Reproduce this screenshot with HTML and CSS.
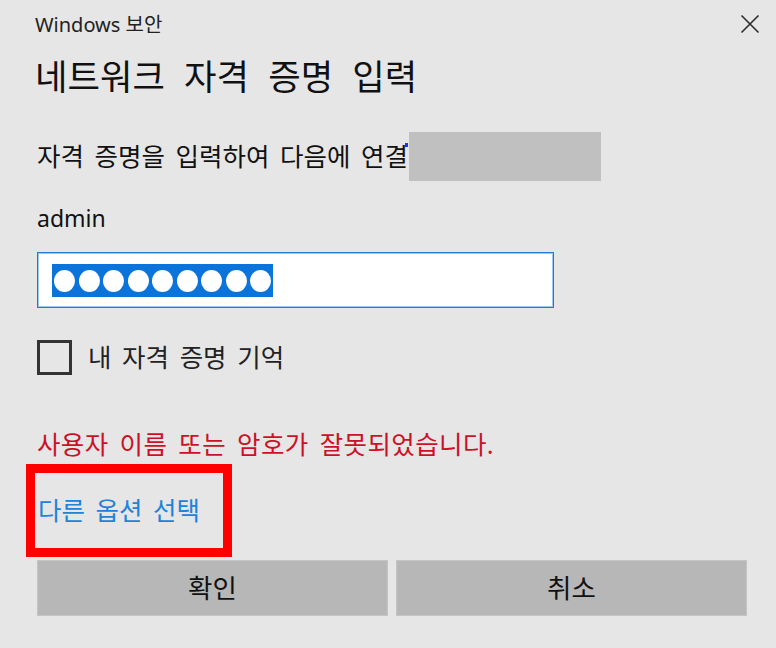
FILE: index.html
```html
<!DOCTYPE html>
<html lang="ko">
<head>
<meta charset="utf-8">
<title>Windows 보안</title>
<link rel="stylesheet" href="styles.css">
</head>
<body>
<div class="dialog">
  <div class="header">
    <span class="app-name">Windows 보안</span>
    <svg class="close" width="20" height="20" viewBox="0 0 20 20" aria-label="닫기">
      <path d="M1.5 1.5 L18.5 18.5 M18.5 1.5 L1.5 18.5" stroke="#2b2b2b" stroke-width="1.6" fill="none"/>
    </svg>
  </div>
  <h1 class="title">네트워크 자격 증명 입력</h1>
  <div class="prompt">
    <span class="prompt-text">자격 증명을 입력하여 다음에 연결</span><span class="redact"><span class="caret-dot"></span></span>
  </div>
  <div class="user">admin</div>
  <div class="password">
    <span class="selection">
      <span class="dot"></span><span class="dot"></span><span class="dot"></span><span class="dot"></span><span class="dot"></span><span class="dot"></span><span class="dot"></span><span class="dot"></span><span class="dot"></span>
    </span>
  </div>
  <div class="remember">
    <span class="checkbox"></span>
    <span class="remember-label">내 자격 증명 기억</span>
  </div>
  <div class="error">사용자 이름 또는 암호가 잘못되었습니다.</div>
  <div class="more">
    <span class="link">다른 옵션 선택</span>
    <span class="highlight"></span>
  </div>
  <div class="buttons">
    <div class="btn">확인</div>
    <div class="btn">취소</div>
  </div>
</div>
</body>
</html>
```

FILE: styles.css
```css
html, body {
  margin: 0;
  padding: 0;
  background: #e6e6e6;
}
body {
  font-family: "Noto Sans", "Noto Sans CJK KR", sans-serif;
  color: #111;
  width: 776px;
  height: 648px;
  overflow: hidden;
}
.dialog {
  padding: 0 29px 0 37px;
}
.header {
  height: 50px;
  display: flex;
  align-items: center;
  justify-content: space-between;
  margin-left: -2px;
  margin-right: -13px;
}
.app-name {
  font-size: 20px;
  line-height: 50px;
  color: #222;
}
.close {
  display: block;
  margin-top: -2px;
}
.title {
  margin: 0 0 0 -2px;
  height: 53px;
  line-height: 53px;
  font-size: 35.3px;
  font-weight: normal;
  word-spacing: 10px;
  color: #111;
  white-space: nowrap;
}
.prompt {
  margin-top: 29px;
  height: 49px;
  display: flex;
  align-items: center;
  font-size: 25.5px;
  word-spacing: 4px;
  white-space: nowrap;
}
.prompt-text {
  line-height: 49px;
}
.redact {
  position: relative;
  display: block;
  width: 192px;
  height: 49px;
  background: #c0c0c0;
  margin-left: 1px;
}
.caret-dot {
  position: absolute;
  left: -4px;
  top: 11px;
  width: 3px;
  height: 4px;
  background: #1a33ff;
}
.user {
  margin-top: 14px;
  height: 47px;
  line-height: 47px;
  font-size: 23px;
}
.password {
  margin-top: 10px;
  width: 517px;
  height: 56px;
  box-sizing: border-box;
  background: #fff;
  border: 1px solid #1f7ad6;
  box-shadow: inset 0 0 0 1px #9cc8f0;
  display: flex;
  align-items: center;
  padding: 1px 0 0 14px;
}
.selection {
  display: flex;
  align-items: center;
  gap: 3.5px;
  height: 33px;
  padding: 0 2px 0 2px;
  background: #0a74da;
}
.dot {
  width: 21px;
  height: 22px;
  border-radius: 50%;
  background: #fff;
}
.remember {
  margin-top: 32px;
  height: 35px;
  display: flex;
  align-items: center;
  gap: 16px;
}
.checkbox {
  width: 35px;
  height: 35px;
  box-sizing: border-box;
  border: 3px solid #333;
}
.remember-label {
  font-size: 25.5px;
  word-spacing: 4px;
  color: #222;
  line-height: 35px;
}
.error {
  margin-top: 50px;
  height: 39px;
  line-height: 39px;
  font-size: 25.5px;
  word-spacing: 4px;
  letter-spacing: 0.4px;
  color: #cc1126;
  white-space: nowrap;
}
.more {
  position: relative;
  height: 93px;
  display: flex;
  align-items: center;
}
.link {
  font-size: 25.5px;
  word-spacing: 4px;
  color: #2083d9;
  margin-left: 1px;
  line-height: 93px;
}
.highlight {
  position: absolute;
  left: -11px;
  top: 0;
  width: 206px;
  height: 93px;
  box-sizing: border-box;
  border: 9px solid #ff0000;
}
.buttons {
  margin-top: 3px;
  display: grid;
  grid-template-columns: 351px 351px;
  gap: 8px;
}
.btn {
  height: 56px;
  line-height: 56px;
  text-align: center;
  background: #b7b7b7;
  box-shadow: inset 0 0 0 1px #c4c4c4;
  font-size: 26.5px;
  color: #111;
}
```
